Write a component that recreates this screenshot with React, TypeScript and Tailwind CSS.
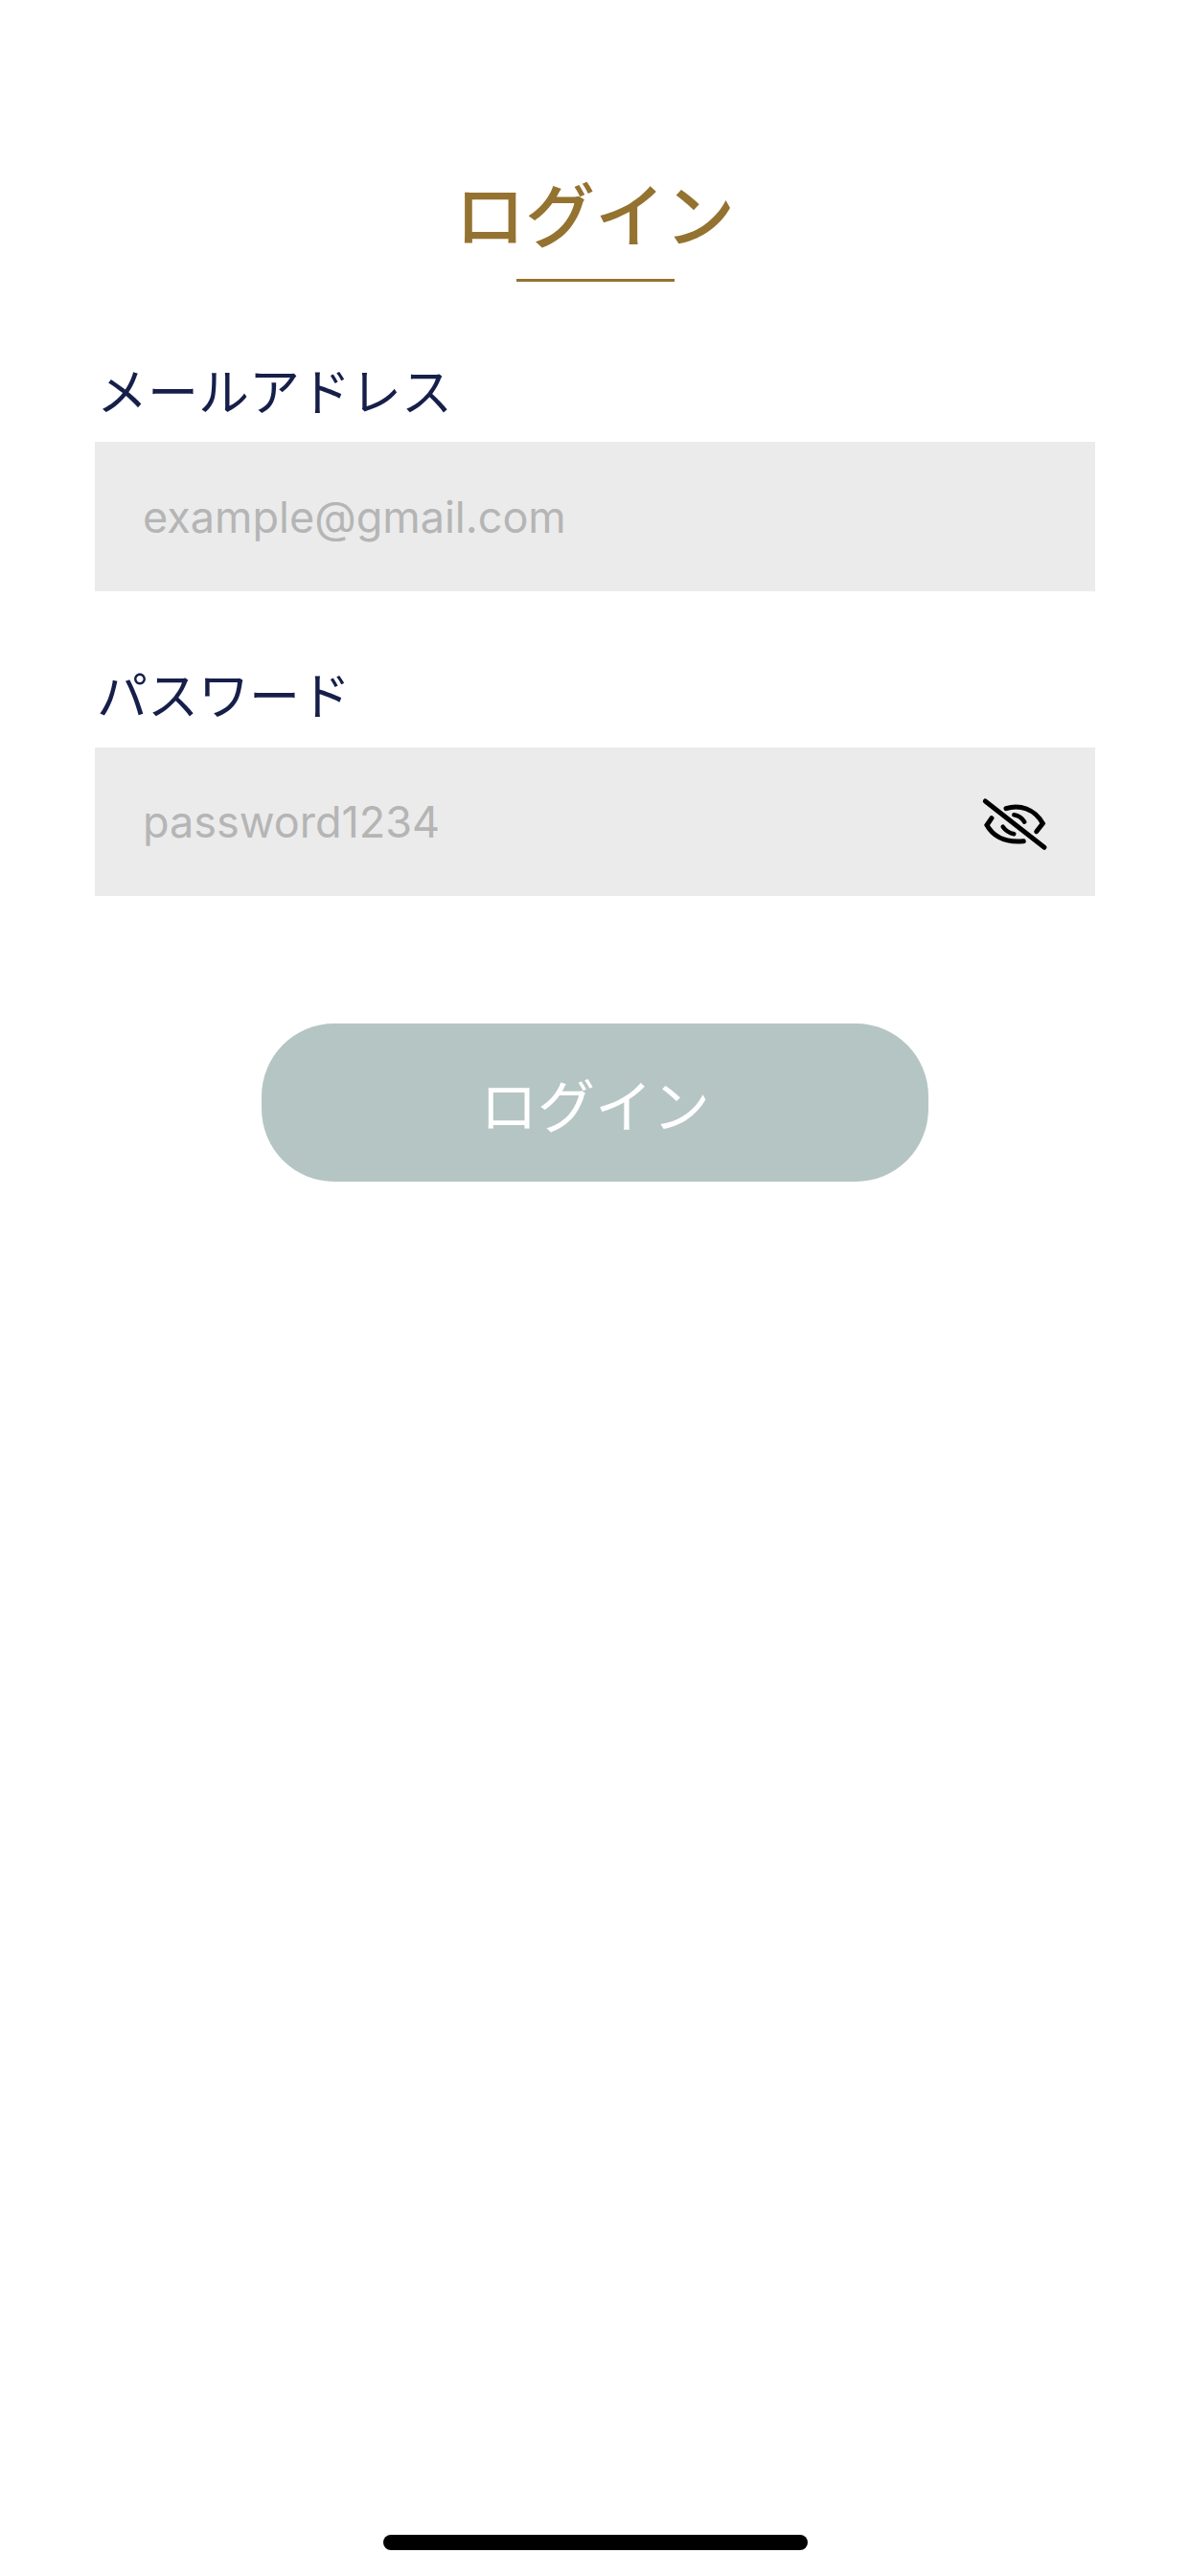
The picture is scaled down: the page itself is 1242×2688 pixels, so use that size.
export default function App() {
  return (
    <div className="relative flex h-[2688px] w-[1242px] flex-col bg-white font-['Inter','Noto_Sans_CJK_JP',sans-serif]">
      <div className="flex flex-col items-center pt-[174px]">
        <h1 className="text-[73px] leading-[92px] font-medium text-[#947230] font-['Noto_Sans_CJK_JP',sans-serif]">ログイン</h1>
        <div className="mt-[25px] h-[3px] w-[165px] bg-[#947230]" />
      </div>
      <div className="flex flex-col px-[99px] pt-[81px]">
        <label className="pl-[2px] text-[53px] leading-[62px] text-[#161f4a] font-['Noto_Sans_CJK_JP',sans-serif]">メールアドレス</label>
        <div className="mt-[24px] flex h-[156px] items-center bg-[#ebebeb] pl-[50px] pt-[2px] text-[45px] text-[#b5b5b5]">example@gmail.com</div>
        <label className="mt-[75px] pl-[2px] text-[53px] leading-[62px] text-[#161f4a] font-['Noto_Sans_CJK_JP',sans-serif]">パスワード</label>
        <div className="mt-[26px] flex h-[155px] items-center justify-between bg-[#ebebeb] pl-[50px] pr-[47px] text-[45px] text-[#b5b5b5]">
          <span>password1234</span>
          <svg width="74" height="58" viewBox="0 0 74 58" fill="none" stroke="#000" strokeWidth="5" strokeLinecap="round" className="mt-[5px] shrink-0">
            <path d="M6.3 5 L68 53.3" />
            <path d="M28 12.7 C42 8 58 13 66.3 28.3 L59.7 36.7" />
            <path d="M13 22.7 L8 30 C13 39 24 49 46.3 46.7" />
            <path d="M36.3 19.3 C41 20 45 23 47.3 26.7" strokeWidth="4.5" />
            <path d="M24.7 31.7 C27 35 31 38 36.3 39.3" strokeWidth="4.5" />
          </svg>
        </div>
        <div className="mt-[133px] flex justify-center">
          <button className="flex h-[165px] w-[696px] items-center justify-center rounded-[76px] bg-[#b5c5c3] text-[60px] text-white font-['Noto_Sans_CJK_JP',sans-serif]">ログイン</button>
        </div>
      </div>
      <div className="mt-auto mb-[27px] flex justify-center">
        <div className="h-[16px] w-[443px] rounded-full bg-black" />
      </div>
    </div>
  );
}
